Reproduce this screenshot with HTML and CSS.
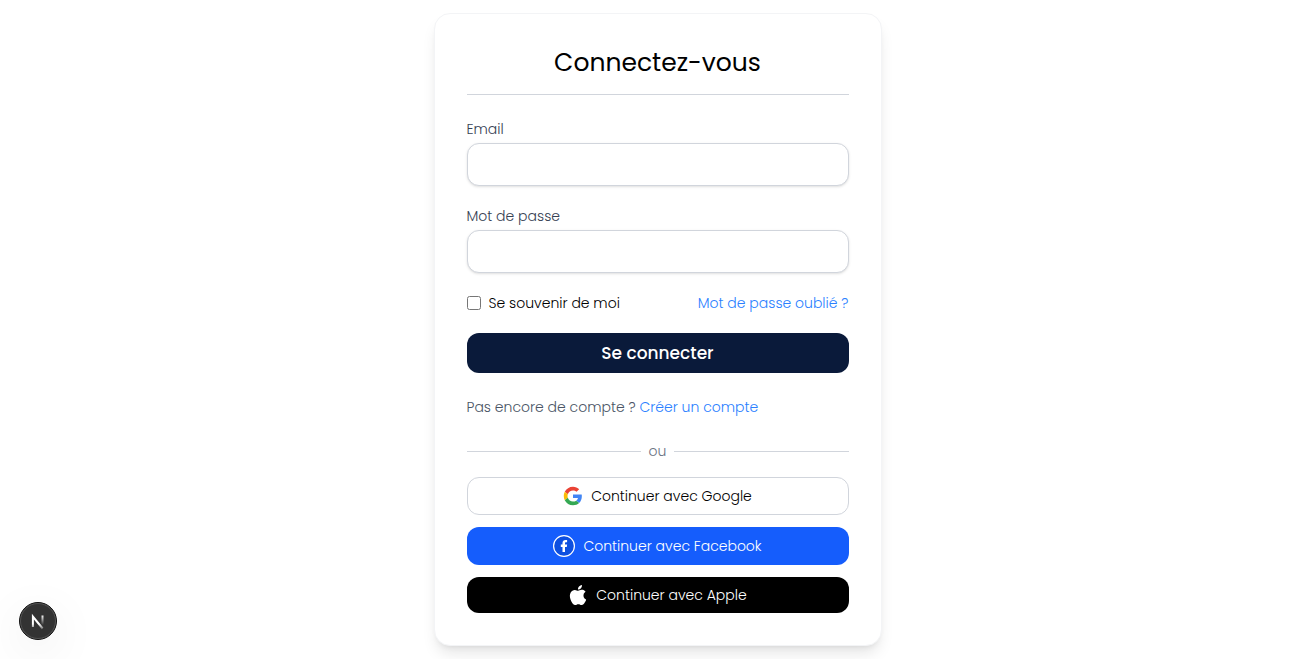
FILE: index.html
```html
<!DOCTYPE html>
<html lang="fr">
<head>
<meta charset="utf-8">
<meta name="viewport" content="width=device-width, initial-scale=1">
<title>Connexion</title>
<link rel="stylesheet" href="styles.css">
</head>
<body>
<main class="page">
  <section class="card">
    <h1 class="title">Connectez-vous</h1>
    <form class="form">
      <div class="field">
        <label class="label" for="email">Email</label>
        <input class="input" id="email" type="email" autocomplete="email">
      </div>
      <div class="field">
        <label class="label" for="password">Mot de passe</label>
        <input class="input" id="password" type="password" autocomplete="current-password">
      </div>
      <div class="options">
        <label class="remember" for="remember"><input class="checkbox" id="remember" type="checkbox">Se souvenir de moi</label>
        <a class="link" href="#">Mot de passe oublié ?</a>
      </div>
      <button class="submit" type="submit">Se connecter</button>
    </form>
    <p class="signup">Pas encore de compte ? <a class="link" href="#">Créer un compte</a></p>
    <div class="divider">ou</div>
    <div class="providers">
      <button class="provider google" type="button">
        <svg width="20" height="20" viewBox="-2 -2 52 52" aria-hidden="true">
          <path fill="#EA4335" d="M24 9.500c3.540 0 6.710 1.220 9.210 3.600l6.850-6.850C35.900 2.380 30.470 0 24 0 14.620 0 6.510 5.380 2.560 13.220l7.980 6.190C12.430 13.720 17.740 9.500 24 9.500z"/>
          <path fill="#4285F4" d="M46.980 24.550c0-1.570-.15-3.090-.38-4.550H24v9.020h12.940c-.58 2.960-2.260 5.480-4.780 7.180l7.730 6c4.510-4.180 7.090-10.360 7.090-17.650z"/>
          <path fill="#FBBC05" d="M10.530 28.590A14.500 14.500 0 0 1 9.770 24c0-1.600.27-3.140.76-4.590l-7.980-6.190A23.900 23.900 0 0 0 0 24c0 3.880.92 7.540 2.560 10.780z"/>
          <path fill="#34A853" d="M24 48c6.480 0 11.930-2.130 15.890-5.810l-7.730-6c-2.150 1.450-4.920 2.300-8.160 2.300-6.260 0-11.570-4.220-13.470-9.910l-7.980 6.190C6.510 42.620 14.620 48 24 48z"/>
        </svg>
        Continuer avec Google
      </button>
      <button class="provider facebook" type="button">
        <svg width="22" height="22" viewBox="0 0 22 22" aria-hidden="true">
          <circle cx="11" cy="11" r="10.400" fill="#0d4fe0" stroke="#fff" stroke-width="1.200"/>
          <path fill="#fff" d="M9.500 17v-5.100H7.800V9.500h1.700V8.300c0-2.200 1.200-3.300 3.100-3.300.6 0 1.200.1 1.500.1v2.200H13c-.8 0-1 .5-1 1.100v1.100h2.100l-.3 2.400H12V17z"/>
        </svg>
        Continuer avec Facebook
      </button>
      <button class="provider apple" type="button">
        <svg width="20" height="20" viewBox="0 0 24 24" aria-hidden="true">
          <path fill="#fff" d="M12.150 6.900c-.95 0-2.420-1.080-3.960-1.040-2.040.03-3.910 1.180-4.960 3.010-2.120 3.680-.55 9.100 1.520 12.090 1.010 1.450 2.210 3.090 3.790 3.040 1.520-.07 2.090-.99 3.930-.99 1.830 0 2.350.99 3.960.95 1.640-.03 2.680-1.480 3.680-2.950 1.160-1.690 1.640-3.320 1.660-3.410-.04-.01-3.180-1.220-3.220-4.860-.03-3.040 2.480-4.490 2.600-4.560-1.430-2.090-3.620-2.320-4.390-2.380-2-.16-3.680 1.090-4.610 1.090zM15.530 3.830C16.370 2.820 16.930 1.400 16.770 0c-1.210.05-2.660.8-3.530 1.820-.78.9-1.450 2.340-1.270 3.710 1.340.1 2.710-.69 3.560-1.700"/>
        </svg>
        Continuer avec Apple
      </button>
    </div>
  </section>
</main>
<button class="devtools" type="button" aria-label="Next.js">
  <svg width="38" height="38" viewBox="0 0 38 38" aria-hidden="true">
    <defs>
      <linearGradient id="fade-leg" x1="0" y1="22" x2="0" y2="27" gradientUnits="userSpaceOnUse"><stop stop-color="#fff"/><stop offset="1" stop-color="#fff" stop-opacity=".3"/></linearGradient>
      <linearGradient id="fade-bar" x1="0" y1="13" x2="0" y2="23" gradientUnits="userSpaceOnUse"><stop stop-color="#fff"/><stop offset="1" stop-color="#fff" stop-opacity="0"/></linearGradient>
    </defs>
    <circle cx="19" cy="19" r="18.500" fill="#333" stroke="#111"/>
    <circle cx="19" cy="19" r="17.500" fill="none" stroke="#5a5a5a" stroke-width=".8"/>
    <path d="M13.900 25V14.500L23.600 26.500" fill="none" stroke="url(#fade-leg)" stroke-width="2"/>
    <path d="M23.500 13.500V23" fill="none" stroke="url(#fade-bar)" stroke-width="2"/>
  </svg>
</button>
</body>
</html>
```
FILE: styles.css
```css
* {
  box-sizing: border-box;
}

body {
  margin: 0;
  background: #fff;
  color: #000;
  font: 300 14px/20px Poppins, Inter, "Open Sans", sans-serif;
}

button,
input {
  font: inherit;
}

button {
  border: 0;
  cursor: pointer;
}

.page {
  display: flex;
  align-items: center;
  justify-content: center;
  min-height: 100vh;
}

.card {
  width: 100%;
  max-width: 448px;
  padding: 32px;
  border: 1px solid #f3f4f6;
  border-radius: 16px;
  background: #fff;
  box-shadow: 0 10px 15px -3px rgb(0 0 0 / 10%), 0 4px 6px -4px rgb(0 0 0 / 10%);
}

.title {
  margin: 0 0 24px;
  padding-bottom: 14px;
  border-bottom: 1px solid #d1d5dc;
  font-size: 25px;
  font-weight: 400;
  line-height: 34px;
  text-align: center;
}

.form {
  display: grid;
  gap: 20px;
}

.field {
  display: grid;
  gap: 4px;
}

.label {
  color: #364153;
}

.input {
  width: 100%;
  height: 43px;
  padding: 8px 16px;
  border: 1px solid #d1d5dc;
  border-radius: 12px;
  background: #fff;
  box-shadow: 0 1px 3px rgb(0 0 0 / 10%), 0 1px 2px -1px rgb(0 0 0 / 10%);
}

.options {
  display: flex;
  align-items: center;
  justify-content: space-between;
}

.remember {
  display: flex;
  align-items: center;
  gap: 8px;
}

.checkbox {
  width: 14px;
  height: 14px;
  margin: 0;
}

.link {
  color: #2b7fff;
  text-decoration: none;
}

.submit {
  height: 40px;
  border-radius: 12px;
  background: #0a1a3a;
  color: #fff;
  font-size: 17px;
  font-weight: 500;
}

.signup {
  margin: 24px 0;
  color: #4a5565;
}

.divider {
  display: flex;
  align-items: center;
  gap: 8px;
  margin-bottom: 16px;
  color: #6a7282;
}

.divider::before,
.divider::after {
  flex: 1;
  height: 1px;
  background: #d1d5dc;
  content: "";
}

.providers {
  display: grid;
  gap: 12px;
}

.provider {
  display: flex;
  align-items: center;
  justify-content: center;
  gap: 8px;
  padding: 8px 16px;
  border-radius: 12px;
  color: #fff;
}

.google {
  border: 1px solid #d1d5dc;
  background: #fff;
  color: #000;
}

.facebook {
  background: #155dfc;
}

.apple {
  background: #000;
}

.devtools {
  position: fixed;
  bottom: 19px;
  left: 19px;
  display: flex;
  padding: 0;
  border-radius: 50%;
  background: none;
  box-shadow: 0 12px 48px rgb(0 0 0 / 8%);
}
```
